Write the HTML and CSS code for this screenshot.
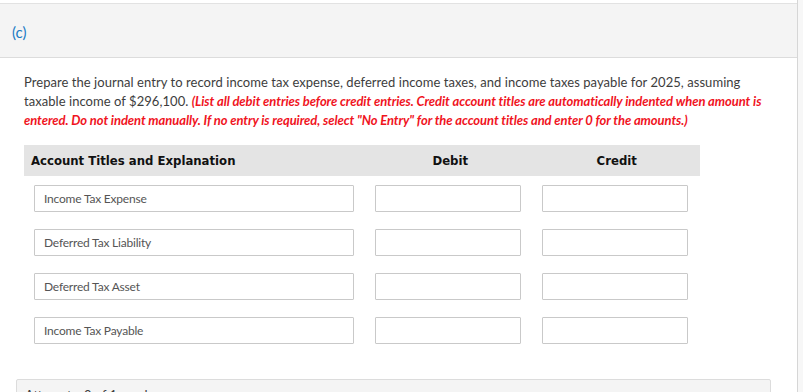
FILE: index.html
```html
<!DOCTYPE html>
<html lang="en">

<head>
  <meta charset="UTF-8">
  <meta name="viewport" content="width=device-width, initial-scale=1.0">
  <title>Journal Entry</title>
  <link rel="stylesheet" href="styles.css">
</head>

<body>
  <div class="page">
    <header class="part-header">
      <span class="part-label">(c)</span>
    </header>

    <div class="question">
      <p class="prompt">
        <span class="lead">Prepare the journal entry to record income tax expense, deferred income taxes, and income taxes payable for 2025, assuming
        taxable income of $296,100.</span>
        <em class="note">(List all debit entries before credit entries. Credit account titles are automatically indented when amount is
          entered. Do not indent manually. If no entry is required, select "No Entry" for the account titles and enter 0 for the amounts.)</em>
      </p>

      <div class="journal">
        <div class="journal-head">
          <div class="col-title">Account Titles and Explanation</div>
          <div class="col-amount">Debit</div>
          <div class="col-amount">Credit</div>
        </div>
        <div class="journal-row">
          <input class="account" type="text" value="Income Tax Expense">
          <input class="amount" type="text">
          <input class="amount" type="text">
        </div>
        <div class="journal-row">
          <input class="account" type="text" value="Deferred Tax Liability">
          <input class="amount" type="text">
          <input class="amount" type="text">
        </div>
        <div class="journal-row">
          <input class="account" type="text" value="Deferred Tax Asset">
          <input class="amount" type="text">
          <input class="amount" type="text">
        </div>
        <div class="journal-row">
          <input class="account" type="text" value="Income Tax Payable">
          <input class="amount" type="text">
          <input class="amount" type="text">
        </div>
      </div>

      <div class="attempts">
        <span>Attempts: 0 of 1 used</span>
      </div>
    </div>
  </div>
</body>

</html>
```

FILE: styles.css
```css
*,
*::before,
*::after {
  box-sizing: border-box;
}

:root {
  --text: #3d3d3d;
  --blue: #1b7bc4;
  --red: #f0141e;
  --line: #d6d6d6;
  --panel: #f4f4f4;
  --head: #e4e4e4;
}

html,
body {
  margin: 0;
  padding: 0;
  background: #f7f7f7;
  font-family: Lato, 'Open Sans', sans-serif;
  color: var(--text);
  overflow: hidden;
}

.page {
  width: 798px;
  height: 392px;
  padding-top: 3px;
  background: #fff;
  border-right: 1px solid var(--line);
  overflow: hidden;
}

.part-header {
  display: flex;
  align-items: center;
  height: 55px;
  padding-left: 12px;
  background: var(--panel);
  border-top: 1px solid #e2e2e2;
  border-bottom: 1px solid #dcdcdc;
}

.part-label {
  color: var(--blue);
  font-size: 15px;
  padding-top: 2px;
}

.question {
  padding: 15px 0 0 24px;
}

.prompt {
  margin: 0;
  width: 750px;
  font-size: 13px;
  line-height: 19px;
}

.lead {
  letter-spacing: 0.05px;
}

.note {
  color: var(--red);
  font-weight: bold;
  letter-spacing: -0.08px;
}

.journal {
  margin-top: 15px;
  width: 676px;
}

.journal-head {
  display: flex;
  align-items: center;
  height: 31px;
  background: var(--head);
  color: #111;
  font-family: 'DejaVu Sans Condensed', 'DejaVu Sans', sans-serif;
  font-weight: bold;
  font-size: 13px;
}

.col-title {
  width: 346px;
  padding-left: 7px;
}

.col-amount {
  width: 168px;
  text-align: center;
}

.journal-row {
  display: flex;
  gap: 21px;
  height: 44px;
  padding: 9px 0 0 10px;
}

.journal-row input {
  height: 27px;
  margin: 0;
  border: 1px solid #c9c9c9;
  border-radius: 1px;
  background: #fff;
  font-family: Lato, sans-serif;
  font-size: 12px;
  letter-spacing: -0.2px;
  color: #555;
  padding: 0 9px;
  outline: none;
}

.journal-row .account {
  width: 320px;
}

.journal-row .amount {
  width: 146px;
}

.attempts {
  margin: 27px 0 0 -8px;
  width: 755px;
  height: 40px;
  padding: 7px 8px;
  background: var(--panel);
  border: 1px solid #dcdcdc;
  border-radius: 2px;
  font-size: 13px;
}
```
